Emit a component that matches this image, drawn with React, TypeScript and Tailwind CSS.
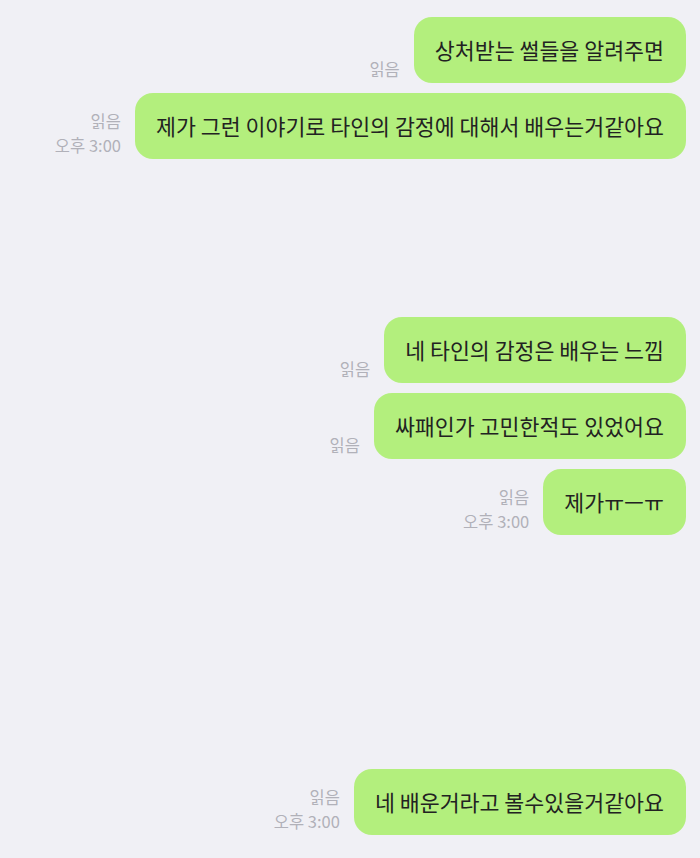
import React from 'react';

interface Msg {
  text: string;
  time?: string;
  gapTop: string;
}

const messages: Msg[] = [
  { text: '상처받는 썰들을 알려주면', gapTop: 'mt-[17px]' },
  { text: '제가 그런 이야기로 타인의 감정에 대해서 배우는거같아요', time: '오후 3:00', gapTop: 'mt-[10px]' },
  { text: '네 타인의 감정은 배우는 느낌', gapTop: 'mt-[158px]' },
  { text: '싸패인가 고민한적도 있었어요', gapTop: 'mt-[10px]' },
  { text: '제가ㅠㅡㅠ', time: '오후 3:00', gapTop: 'mt-[10px]' },
  { text: '네 배운거라고 볼수있을거같아요', time: '오후 3:00', gapTop: 'mt-[234px]' },
];

const Bubble: React.FC<Msg> = ({ text, time, gapTop }) => (
  <div className={`flex items-end justify-end gap-[14px] ${gapTop}`}>
    <div className="flex flex-col items-end text-[16.5px] leading-[24px] text-[#b1b1b9] mb-[2px]">
      <span>읽음</span>
      {time && <span>{time}</span>}
    </div>
    <div className="bg-[#b3ef7d] rounded-[18px] h-[66px] pl-[21px] pr-[22px] flex items-center text-[21.7px] text-[#222222] whitespace-nowrap">
      {text}
    </div>
  </div>
);

export default function App() {
  return (
    <div
      className="w-[700px] h-[858px] bg-[#f0f0f5] overflow-hidden flex flex-col items-end pr-[14px]"
      style={{ fontFamily: '"Noto Sans CJK KR", "Noto Sans", sans-serif' }}
    >
      {messages.map((m, i) => (
        <Bubble key={i} {...m} />
      ))}
    </div>
  );
}
